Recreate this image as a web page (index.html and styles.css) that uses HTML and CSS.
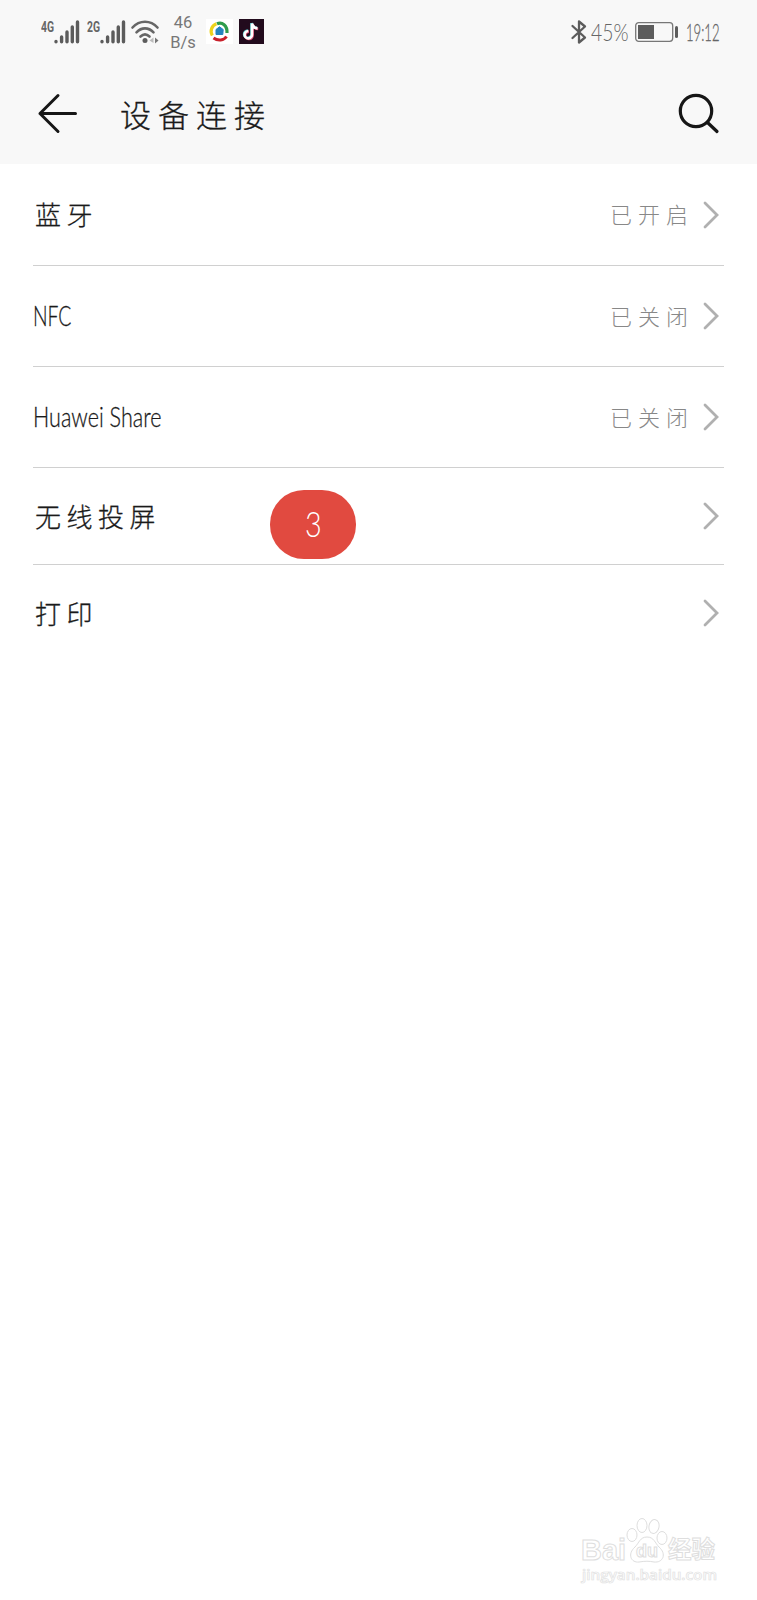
FILE: index.html
```html
<!DOCTYPE html>
<html lang="zh-CN">
<head>
<meta charset="utf-8">
<title>设备连接</title>
<link rel="stylesheet" href="styles.css">
</head>
<body>
<header class="top">
  <div class="status">
    <div class="signal">
      <span class="net"><b class="net-text">4G</b></span>
      <svg class="bars" width="26" height="24" viewBox="0 0 26 24"><path d="M2 21.500v.2M7.600 17v4.700M13 12v9.700M18.300 7v14.700M23.500 2v19.700"/></svg>
    </div>
    <div class="signal second">
      <span class="net"><b class="net-text">2G</b></span>
      <svg class="bars" width="26" height="24" viewBox="0 0 26 24"><path d="M2 21.500v.2M7.600 17v4.700M13 12v9.700M18.300 7v14.700M23.500 2v19.700"/></svg>
    </div>
    <svg class="wifi" width="28" height="24" viewBox="0 0 28 24">
      <path d="M1.500 7.500C8.500-.2 19.500-.2 26.500 7.500M5.500 12.300c5-5.200 12-5.200 17 0M9.500 16.500c2.800-2.600 6.200-2.600 9 0"/>
      <circle cx="14" cy="20.500" r="2.500"/>
      <path class="down" d="M22.500 17.500v5.500l-4-2.500z"/><path class="up" d="M24 17.500v6l3.500-3z"/>
    </svg>
    <div class="speed"><span>46</span><span>B/s</span></div>
    <svg class="app" width="27" height="25" viewBox="0 0 27 25">
      <rect width="27" height="25" fill="#fff"/>
      <path d="M6.300 16.500A8 8 0 0 1 10.500 4.800" fill="none" stroke="#ecd21c" stroke-width="3.200"/>
      <path d="M11 4.800c5-2.300 10.500 1.500 10 9.200" fill="none" stroke="#2f9c4b" stroke-width="3.200"/>
      <path d="M20.500 17.500c-2.500 4-8.500 4.700-13 1.500" fill="none" stroke="#c8202b" stroke-width="3"/>
      <path d="M10 10.500l3.500-2.700 3.700 2.700-.4 5H10z" fill="#2384bf" stroke="#2384bf" stroke-linejoin="round"/>
    </svg>
    <svg class="tiktok" width="25" height="25" viewBox="0 0 25 25">
      <rect width="25" height="25" fill="#220b1d"/>
      <g fill="none" stroke-width="2.600">
        <path d="M13 4.500v11a3.700 3.700 0 1 1-3.700-3.500M13 4.500c.4 3 2.400 4.600 5.500 4.900" stroke="#55cbd0" transform="translate(-.5 -.5)"/>
        <path d="M13 4.500v11a3.700 3.700 0 1 1-3.700-3.500M13 4.500c.4 3 2.400 4.600 5.500 4.900" stroke="#d44b6f" transform="translate(.7 .6)"/>
        <path d="M13 4.500v11a3.700 3.700 0 1 1-3.700-3.500M13 4.500c.4 3 2.400 4.600 5.500 4.900" stroke="#fff"/>
      </g>
    </svg>
    <svg class="bluetooth" width="16" height="26" viewBox="0 0 16 26"><path d="M1.500 7L14 18.500 8 23.500V2.500L14 7.500 1.500 19"/></svg>
    <span class="battery-text"><span class="narrow">45%</span></span>
    <svg class="battery" width="44" height="20" viewBox="0 0 44 20">
      <rect x=".7" y=".7" width="37" height="18.600" rx="3" fill="none" stroke="#777" stroke-width="1.300"/>
      <rect x="3" y="3" width="16" height="14" fill="#5c5c5c"/>
      <path d="M41.500 5.500v9" stroke="#5c5c5c" stroke-width="3" stroke-linecap="round"/>
    </svg>
    <span class="clock"><span class="narrow">19:12</span></span>
  </div>
  <div class="bar">
    <svg class="back" width="40" height="40" viewBox="0 0 40 40"><path d="M20 2.500L2 20.500 20 38.500M2 20.500H37.500"/></svg>
    <h1 class="title">设备连接</h1>
    <svg class="search" width="42" height="42" viewBox="0 0 42 42"><circle cx="18" cy="18" r="15.700"/><path d="M29.500 29.500L39 38.500"/></svg>
  </div>
</header>
<main class="list">
  <div class="row">
    <span class="label">蓝牙</span><span class="value">已开启</span>
    <svg class="chevron" width="16" height="28" viewBox="0 0 16 28"><path d="M2 2L14 14 2 26"/></svg>
  </div>
  <div class="row nfc">
    <span class="label latin">NFC</span><span class="value">已关闭</span>
    <svg class="chevron" width="16" height="28" viewBox="0 0 16 28"><path d="M2 2L14 14 2 26"/></svg>
  </div>
  <div class="row share">
    <span class="label latin">Huawei Share</span><span class="value">已关闭</span>
    <svg class="chevron" width="16" height="28" viewBox="0 0 16 28"><path d="M2 2L14 14 2 26"/></svg>
  </div>
  <div class="row short">
    <span class="label">无线投屏</span><span class="badge"><span class="digit">3</span></span>
    <svg class="chevron" width="16" height="28" viewBox="0 0 16 28"><path d="M2 2L14 14 2 26"/></svg>
  </div>
  <div class="row short last">
    <span class="label">打印</span>
    <svg class="chevron" width="16" height="28" viewBox="0 0 16 28"><path d="M2 2L14 14 2 26"/></svg>
  </div>
</main>
<footer class="watermark">
  <svg width="142" height="76" viewBox="0 0 142 76">
    <g fill="#fff" stroke="#dedede" stroke-width="1">
      <ellipse cx="51" cy="20" rx="5" ry="6.500"/><ellipse cx="61" cy="10.500" rx="5" ry="7"/><ellipse cx="73" cy="11.500" rx="5" ry="7" transform="rotate(12 73 11.500)"/><ellipse cx="81" cy="23" rx="5" ry="6.500"/>
      <path d="M66 22c-7 0-8 6-12 10-8 7-4 16 4 15 6-1 10-1 15 0 9 1 13-8 5-15-4-4-5-10-12-10z"/>
      <text class="mark" x="0" y="45" font-size="29" textLength="45" lengthAdjust="spacingAndGlyphs">Bai</text>
      <text class="mark" x="55" y="42" font-size="18" textLength="22" lengthAdjust="spacingAndGlyphs">du</text>
      <text class="mark cjk" x="87" y="43" font-size="23.500" textLength="47">经验</text>
    </g>
    <text class="site" x="1" y="65" font-size="14" textLength="135" lengthAdjust="spacingAndGlyphs">jingyan.baidu.com</text>
  </svg>
</footer>
</body>
</html>
```
FILE: styles.css
```css
* { box-sizing: border-box; }
body {
  margin: 0;
  height: 1600px;
  display: flex;
  flex-direction: column;
  background: #fff;
  color: #1a1a1a;
  font-family: "Lato", "Noto Sans CJK SC", sans-serif;
  font-weight: 300;
}
svg { display: block; flex: none; overflow: visible; }
.top { height: 164px; background: #f8f8f8; }
.status {
  height: 63px;
  display: flex;
  align-items: center;
  padding: 0 39px 0 41px;
  color: #666;
}
.signal { display: flex; height: 26px; }
.signal.second { margin-left: 7px; }
.net { width: 13px; line-height: 13px; }
.net-text {
  display: inline-block;
  font: 700 14px/11px "Roboto", sans-serif;
  transform: scaleX(.74);
  transform-origin: left;
}
.bars { margin-top: 1px; }
.bars path { fill: none; stroke: #5c5c5c; stroke-width: 3.400; stroke-linecap: round; }
.wifi { margin-left: 5px; fill: #5c5c5c; }
.wifi path { fill: none; stroke: #666; stroke-width: 2.600; stroke-linecap: round; }
.wifi .down { fill: #bbb; stroke: none; }
.wifi .up { fill: #777; stroke: none; }
.speed {
  width: 26px;
  margin-left: 11px;
  display: flex;
  flex-direction: column;
  align-items: center;
  font: 400 16.500px/20px "Roboto", sans-serif;
  color: #777;
  padding-top: 2px;
}
.app { margin-left: 10px; }
.tiktok { margin-left: 6px; }
.bluetooth { margin-left: auto; fill: none; stroke: #5c5c5c; stroke-width: 2.300; stroke-linejoin: round; stroke-linecap: round; }
.battery-text { width: 39px; margin-left: 4px; font-size: 23px; }
.clock { width: 32px; margin-left: 7px; font-size: 23px; }
.narrow { display: inline-block; transform: scaleX(.84); transform-origin: left; white-space: nowrap; }
.clock .narrow { transform: scaleX(.57); -webkit-text-stroke: .3px #666; }
.battery { margin-left: 5px; }
.bar {
  height: 101px;
  display: flex;
  align-items: flex-start;
  padding: 30px 37px 0 38px;
}
.back { fill: none; stroke: #161616; stroke-width: 3; stroke-linecap: round; stroke-linejoin: round; }
.title {
  margin: 0 0 0 42px;
  padding-top: 2px;
  font-size: 31px;
  line-height: 40px;
  font-weight: 300;
  letter-spacing: 7px;
  -webkit-text-stroke: .3px #1a1a1a;
}
.search { margin-left: auto; fill: none; stroke: #161616; stroke-width: 3.200; stroke-linecap: round; }
.list { padding: 0 33px; }
.row {
  height: 102px;
  display: flex;
  align-items: center;
  border-bottom: 1px solid #d0d0d0;
  padding: 0 5px 0 2px;
}
.nfc, .share { height: 101px; }
.short { height: 97px; }
.last { border-bottom-color: transparent; }
.label {
  font-size: 26px;
  letter-spacing: 5.500px;
  line-height: 40px;
  padding-top: 1px;
  -webkit-text-stroke: .3px #1a1a1a;
}
.latin {
  font-size: 28px;
  letter-spacing: 0;
  margin-left: -2px;
  padding: 0 0 2px;
  transform: scaleX(.77);
  transform-origin: left;
  white-space: nowrap;
}
.nfc .latin { transform: scaleX(.69); }
.value {
  margin-left: auto;
  font-size: 22px;
  line-height: 32px;
  padding-top: 1px;
  letter-spacing: 6px;
  color: #888;
}
.chevron { margin-left: 9px; fill: none; stroke: #b0b0b0; stroke-width: 2.800; stroke-linecap: round; }
.short .chevron { margin-left: auto; }
.badge {
  width: 86px;
  height: 69px;
  margin: 16px 0 0 109px;
  border-radius: 34px;
  background: #e14a40;
  color: #fff;
  display: flex;
  align-items: center;
  justify-content: center;
  font-size: 36px;
}
.digit { transform: translateY(-1px) scaleX(.8); }
.watermark { margin: auto 34px 9px auto; }
.mark { font-family: "Liberation Sans", sans-serif; font-weight: 700; }
.mark.cjk { font-family: "Noto Sans CJK SC", sans-serif; }
.site { fill: #fff; stroke: #e2e2e2; stroke-width: .7; font-family: "Open Sans", sans-serif; font-weight: 600; }
```
